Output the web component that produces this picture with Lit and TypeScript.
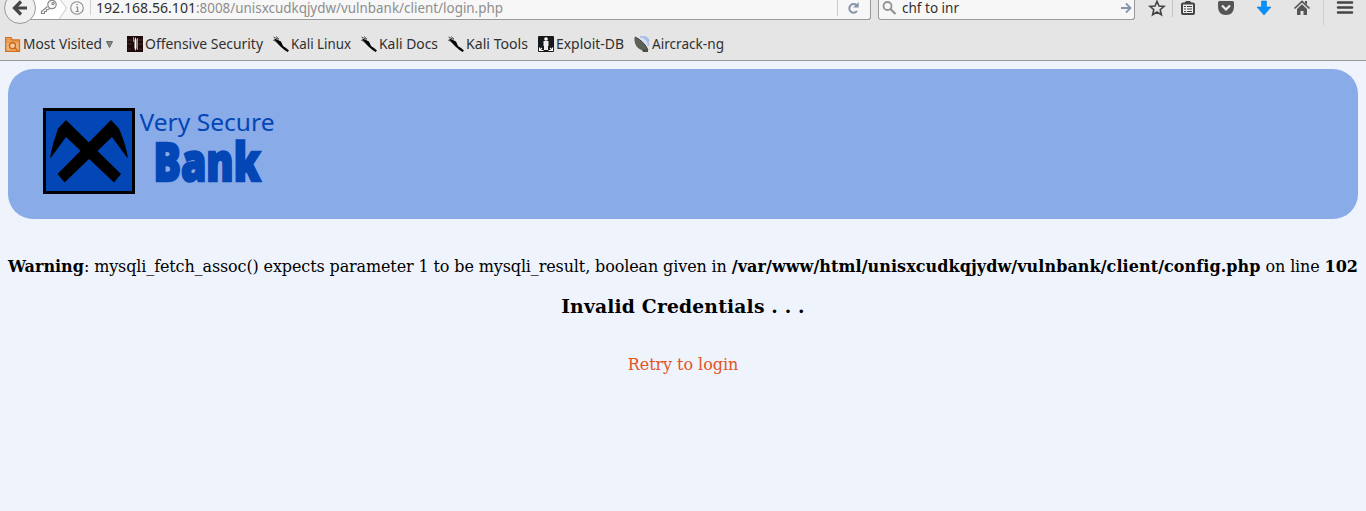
import { LitElement, html, css, svg } from "lit";
import { customElement } from "lit/decorators.js";

const dagger = svg`<path d="M1.500 2.500L5 4l3 1.500 2 4.500 3 2 3 2.500-1.500 1.500-3-2L8 11 5 8 1.500 4z" fill="#050505"/><path d="M.5 1l5 2.500M3 .5l3 2.500M0 4l4 2" stroke="#333" stroke-width=".8"/>`;

const glyphs: Record<string, unknown> = {
  folder: svg`<path d="M.7 15.300V1.700h5.300l1.300 2.300h7.200v11.300z" fill="#f0b277" stroke="#d4701c" stroke-width="1.300"/><path d="M1 6h13.500M1 3.800h6" stroke="#e08433"/><circle cx="7.500" cy="9.800" r="3" fill="#f6cda4" stroke="#cf6816" stroke-width="1.400"/><path d="M9.700 11.800l3 3" stroke="#cf6816" stroke-width="1.600"/>`,
  offsec: svg`<path d="M0 0h16v16H0z" fill="#1d0b0b"/><path d="M0 4h5M0 8h5M11 4h5M11 8h5M1 13h3M12 13h3" stroke="#4e2929"/><path d="M6.500 1v5M10.500 2v12" stroke="#999"/><path d="M8.500 1l1 3v8l-1 3-1-3V4z" fill="#fff"/>`,
  dagger,
  exploit: svg`<rect width="16" height="16" rx="1" fill="#15191c"/><circle cx="8" cy="3" r="1.800" fill="#fff"/><path d="M5.500 5h5v5H10v4H6v-4h-.5z" fill="#eee"/><path d="M1.500 11.500v3h4M14.500 11.500v3h-4M2 14l2-2M14 14l-2-2" stroke="#fff" fill="none" stroke-width="1.100"/>`,
  dish: svg`<path d="M6 .8Q14 1 14.500 10M9 .5q5 1 6 5" fill="none" stroke="#a9bfe8" stroke-width="1.800"/><path d="M7 3q5 2 6 9" stroke="#d8e3fa" fill="none" stroke-width="2"/><path d="M.5 1Q0 7 3 11q4 4.500 11 3.500Q10 5 .5 1z" fill="#5c6055"/><path d="M1 1q9 4 13 13" stroke="#30342e" fill="none"/><path d="M8 14l6-1v3H9z" fill="#4b4f48"/>`,
};

const bookmarks = [
  { icon: "folder", label: "Most Visited", cls: "most" },
  { icon: "offsec", label: "Offensive Security", cls: "off" },
  { icon: "dagger", label: "Kali Linux", cls: "linux" },
  { icon: "dagger", label: "Kali Docs", cls: "docs" },
  { icon: "dagger", label: "Kali Tools", cls: "tools" },
  { icon: "exploit", label: "Exploit-DB", cls: "exploit" },
  { icon: "dish", label: "Aircrack-ng", cls: "air" },
];

@customElement("browser-chrome")
class BrowserChrome extends LitElement {
  static styles = css`
    :host { display: block; background: #e5e5e5; border-bottom: 1px solid #999; font: 14px/20px "Noto Sans", sans-serif; color: #303030; }
    svg { display: block; flex: none; }
    svg text { font-family: "Noto Sans", sans-serif; font-size: 14px; }
    .bar { display: flex; height: 28px; }
    .field { overflow: visible; }
    .url, .search { box-sizing: border-box; height: 20px; background: #f7f7f7; border: solid #999; border-width: 0 1px 1px 0; border-radius: 0 0 3px 0; display: flex; }
    .url { width: 781px; justify-content: space-between; }
    .search { width: 257px; margin-left: 7px; border-left-width: 1px; border-radius: 0 0 3px 3px; }
    .marks { display: flex; height: 32px; padding-left: 5px; align-items: center; }
    .mark { display: flex; align-items: center; flex: none; }
    .most { width: 122px; }
    .off { width: 146px; }
    .linux { width: 88px; }
    .docs { width: 87px; }
    .tools { width: 90px; }
    .exploit { width: 96px; }
  `;

  private widths: Record<string, number> = { most: 79, off: 118, linux: 60, docs: 59, tools: 62, exploit: 68, air: 72 };

  render() {
    return html`
      <div class="bar">
        <svg width="90" height="28">
          <path d="M20 0h70v20H20z" fill="#f7f7f7"/><path d="M20 19.500h70" stroke="#999"/>
          <path d="M36 0h24l6.500 8-8 11H30z" fill="#fff"/>
          <path d="M60.500 0l6 8-7 11" fill="none" stroke="#c9c9c9"/>
          <circle cx="20" cy="8" r="15.500" fill="#f0f0f0" stroke="#999"/>
          <path d="M21 1.500L14.500 8l6.500 6.500M15 8h12" fill="none" stroke="#474747" stroke-width="3.200"/>
          <g fill="none" stroke="#8b8b8b" stroke-width="1.200"><path d="M47.500 6.500l-6 5v2h3v-2h2v-2h2l1.500-1.500"/><circle cx="52" cy="4.500" r="4.200" fill="#fff"/><circle cx="53" cy="3.500" r="1.200"/></g>
          <circle cx="77" cy="8" r="6.300" fill="none" stroke="#8d8d8d" stroke-width="1.100"/>
          <path d="M76 7h1.500v4M75.500 11.500h3.500M76.500 4.500h1.500" stroke="#8d8d8d" stroke-width="1.200" fill="none"/>
        </svg>
        <div class="url">
          <svg class="field" width="420" height="19">
            <path d="M.5 0v15" stroke="#d0d0d0"/>
            <text x="6" y="13" textLength="100" lengthAdjust="spacingAndGlyphs" fill="#303030">192.168.56.101</text>
            <text x="106" y="13" textLength="307" lengthAdjust="spacingAndGlyphs" fill="#8e8e8e">:8008/unisxcudkqjydw/vulnbank/client/login.php</text>
          </svg>
          <svg width="33" height="19">
            <path d="M.5 0v16" stroke="#ccc"/>
            <path d="M19.500 5.200A4.300 4.300 0 1 0 20 11" fill="none" stroke="#8496a9" stroke-width="2"/><path d="M21.700 2v5.500h-5.500z" fill="#8496a9"/>
          </svg>
        </div>
        <div class="search">
          <svg class="field" width="255" height="19">
            <circle cx="8.500" cy="6" r="4" fill="none" stroke="#929292" stroke-width="1.800"/><path d="M11.500 9l5 5" stroke="#929292" stroke-width="2.200"/>
            <text x="23" y="13" textLength="57" lengthAdjust="spacingAndGlyphs" fill="#303030">chf to inr</text>
            <path d="M242 8h9M247 3.500l4.500 4.500-4.500 4.500" fill="none" stroke="#8496a9" stroke-width="1.800"/>
          </svg>
        </div>
        <svg width="231" height="28">
          <path d="M22 1.300l2 4.700 5 .4-3.800 3.300 1.200 5-4.400-2.700-4.400 2.700 1.200-5L15 6.400 20 6z" fill="none" stroke="#444" stroke-width="1.600"/>
          <path d="M37.500 0v17" stroke="#c4c4c4"/>
          <rect x="47" y="3.500" width="12" height="10.500" rx="1" fill="#eee" stroke="#444" stroke-width="2"/><path d="M50 2.500l1-1h4l1 1z" fill="#444" stroke="#444"/><path d="M49 6.500h2m1 0h5M49 9h2m1 0h5M49 11.500h2m1 0h5" stroke="#444" stroke-width="1.100"/>
          <path d="M84.500 1h13q1.500 0 1.500 1.500v4Q99 15 91 15T83 6.500v-4Q83 1 84.500 1z" fill="#555"/><path d="M87 5.500l4 4 4-4" fill="none" stroke="#eee" stroke-width="2.200"/>
          <path d="M126.500 1h5v6h4.500l-7 8-7-8h4.500z" fill="#0b8ffb" stroke="#087edc" stroke-width=".6"/>
          <path d="M159.500 8.500L167 1.500l7.500 7" fill="none" stroke="#555" stroke-width="1.700"/><path d="M162 9l5-4.700L172 9v6h-3.500v-4h-3v4H162z" fill="#555"/><path d="M170 1h2v4l-2-2z" fill="#555"/>
          <path d="M188.500 0v25" stroke="#cecece"/>
          <path d="M203 2.500h14M203 7.500h14M203 12.500h14" stroke="#444" stroke-width="2.500" stroke-linecap="round"/>
        </svg>
      </div>
      <div class="marks">
        ${bookmarks.map((b) => html`<div class="mark ${b.cls}">
          <svg width="16" height="16" viewBox="0 0 16 16">${glyphs[b.icon]}</svg>
          <svg width=${this.widths[b.cls] + 14} height="22"><text x="2" y="16" textLength=${this.widths[b.cls]} lengthAdjust="spacingAndGlyphs" fill="#303030">${b.label}</text>
          ${b.cls === "most" ? svg`<path d="M85.500 8.500h6l-3 6z" fill="#888" stroke="#666"/>` : ""}</svg>
        </div>`)}
      </div>`;
  }
}

@customElement("bank-banner")
class BankBanner extends LitElement {
  static styles = css`
    :host { display: block; box-sizing: border-box; height: 150px; border-radius: 25px; background: #89abe8; padding: 38px 34px; }
    svg { display: block; }
    .very { font: 24px "Noto Sans", sans-serif; }
    .bank { font: 800 53px "Open Sans", sans-serif; }
  `;

  render() {
    return html`<svg width="240" height="90">
      <rect x="2.500" y="2.500" width="89" height="83" fill="#0346b6" stroke="#000" stroke-width="3"/>
      <path d="M24 13L79 67l-7 8.500L24 30 9 50.500H8Q11 35 16 21.500z"/>
      <path d="M69 13L15.500 67l7 8.500L70 30l15 20.500h1Q83 35 77 21.500z"/>
      <text class="very" x="97.500" y="23.500" textLength="135" lengthAdjust="spacingAndGlyphs" fill="#0346b6">Very Secure</text>
      <text class="bank" x="111.500" y="74" textLength="107" lengthAdjust="spacingAndGlyphs" fill="#0346b6" stroke="#0346b6" stroke-width="2.400">Bank</text>
    </svg>`;
  }
}

@customElement("app-root")
class AppRoot extends LitElement {
  static styles = css`
    :host { display: block; min-height: 511px; background: #eef3fc; color: #000; font: 16px/19px "DejaVu Serif", serif; }
    .page { padding: 8px; }
    .warning { margin-top: 38px; white-space: nowrap; letter-spacing: -0.125px; }
    .warning b { letter-spacing: 0; }
    .warning .path { letter-spacing: 0.07px; }
    .invalid { margin: 19px 0 0; font-size: 18.72px; line-height: 22px; text-align: center; letter-spacing: 0.19px; }
    .retry { margin-top: 38px; text-align: center; letter-spacing: -0.06px; }
    .link { color: #e35420; text-decoration: none; }
  `;

  render() {
    return html`
      <browser-chrome></browser-chrome>
      <main class="page">
        <bank-banner></bank-banner>
        <div class="warning"><b>Warning</b>: mysqli_fetch_assoc() expects parameter 1 to be mysqli_result, boolean given in <b class="path">/var/www/html/unisxcudkqjydw/vulnbank/client/config.php</b> on line <b>102</b></div>
        <h3 class="invalid">Invalid Credentials . . .</h3>
        <div class="retry"><a class="link" href="#">Retry to login</a></div>
      </main>`;
  }
}
